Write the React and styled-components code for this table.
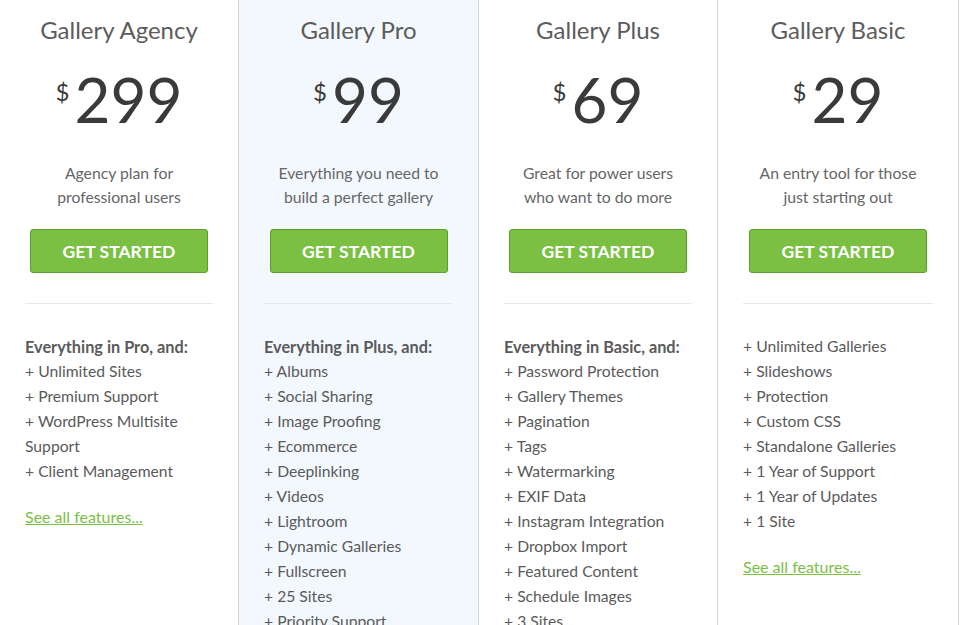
import React from "react";
import styled, { createGlobalStyle } from "styled-components";

const plans = [
  {
    name: "Gallery Agency",
    price: "299",
    blurb: ["Agency plan for", "professional users"],
    lead: "Everything in Pro, and:",
    features: ["Unlimited Sites", "Premium Support", "WordPress Multisite Support", "Client Management"],
    more: true,
  },
  {
    name: "Gallery Pro",
    price: "99",
    blurb: ["Everything you need to", "build a perfect gallery"],
    lead: "Everything in Plus, and:",
    features: [
      "Albums",
      "Social Sharing",
      "Image Proofing",
      "Ecommerce",
      "Deeplinking",
      "Videos",
      "Lightroom",
      "Dynamic Galleries",
      "Fullscreen",
      "25 Sites",
      "Priority Support",
    ],
    highlight: true,
  },
  {
    name: "Gallery Plus",
    price: "69",
    blurb: ["Great for power users", "who want to do more"],
    lead: "Everything in Basic, and:",
    features: [
      "Password Protection",
      "Gallery Themes",
      "Pagination",
      "Tags",
      "Watermarking",
      "EXIF Data",
      "Instagram Integration",
      "Dropbox Import",
      "Featured Content",
      "Schedule Images",
      "3 Sites",
    ],
  },
  {
    name: "Gallery Basic",
    price: "29",
    blurb: ["An entry tool for those", "just starting out"],
    features: [
      "Unlimited Galleries",
      "Slideshows",
      "Protection",
      "Custom CSS",
      "Standalone Galleries",
      "1 Year of Support",
      "1 Year of Updates",
      "1 Site",
    ],
    more: true,
  },
];

const GlobalStyle = createGlobalStyle`
  body {
    margin: 0;
    background: #fff;
    font-family: Lato, "Open Sans", sans-serif;
    overflow: hidden;
  }
`;

const Table = styled.div`
  display: grid;
  grid-template-columns: 239px 240px 239px 241px;
  height: 625px;
  overflow: hidden;
`;

const Column = styled.div`
  padding: 15px 25px 0;
  border-right: 1px solid #d3d3d3;
  background: ${(p) => (p.$highlight ? "#f3f8fe" : "#fff")};
  min-height: 700px;
`;

const Title = styled.h3`
  margin: 0;
  text-align: center;
  font-size: 24px;
  line-height: 30px;
  font-weight: 400;
  color: #5c5c5c;
`;

const Price = styled.div`
  display: flex;
  justify-content: center;
  margin-top: 18px;
  color: #3a3a3a;
  font-size: 62px;
  line-height: 72px;
  font-weight: 400;
`;

const Currency = styled.span`
  font-size: 24px;
  line-height: 24px;
  margin: 17px 5px 0 0;
`;

const Blurb = styled.p`
  margin: 26px 0 0;
  text-align: center;
  font-size: 15.75px;
  line-height: 24px;
  color: #666;
`;

const Button = styled.a`
  display: flex;
  align-items: center;
  justify-content: center;
  width: 178px;
  height: 44px;
  box-sizing: border-box;
  margin: 20px auto 0;
  background: #7bc043;
  border: 1px solid #5e9e2e;
  border-radius: 3px;
  color: #fff;
  font-size: 17.5px;
  font-weight: 700;
  text-decoration: none;
`;

const Divider = styled.hr`
  margin: 30px 0 0;
  border: 0;
  border-top: 1px solid #e8e8e8;
`;

const Features = styled.ul`
  list-style: none;
  margin: 30px 0 0;
  padding: 0;
  font-size: 15.7px;
  line-height: 25px;
  color: #5a5a5a;
`;

const Lead = styled.li`
  font-size: 16.3px;
  font-weight: 700;
`;

const MoreLink = styled.a`
  display: inline-block;
  margin-top: 20px;
  font-size: 16px;
  line-height: 25px;
  color: #7bc043;
  text-decoration: underline;
`;

const PlanColumn = ({ plan }) => (
  <Column $highlight={plan.highlight}>
    <Title>{plan.name}</Title>
    <Price>
      <Currency>$</Currency>
      {plan.price}
    </Price>
    <Blurb>
      {plan.blurb[0]}
      <br />
      {plan.blurb[1]}
    </Blurb>
    <Button href="#">GET STARTED</Button>
    <Divider />
    <Features>
      {plan.lead && <Lead>{plan.lead}</Lead>}
      {plan.features.map((f) => (
        <li key={f}>+ {f}</li>
      ))}
    </Features>
    {plan.more && <MoreLink href="#">See all features...</MoreLink>}
  </Column>
);

export default function App() {
  return (
    <>
      <GlobalStyle />
      <Table>
        {plans.map((p) => (
          <PlanColumn key={p.name} plan={p} />
        ))}
      </Table>
    </>
  );
}
